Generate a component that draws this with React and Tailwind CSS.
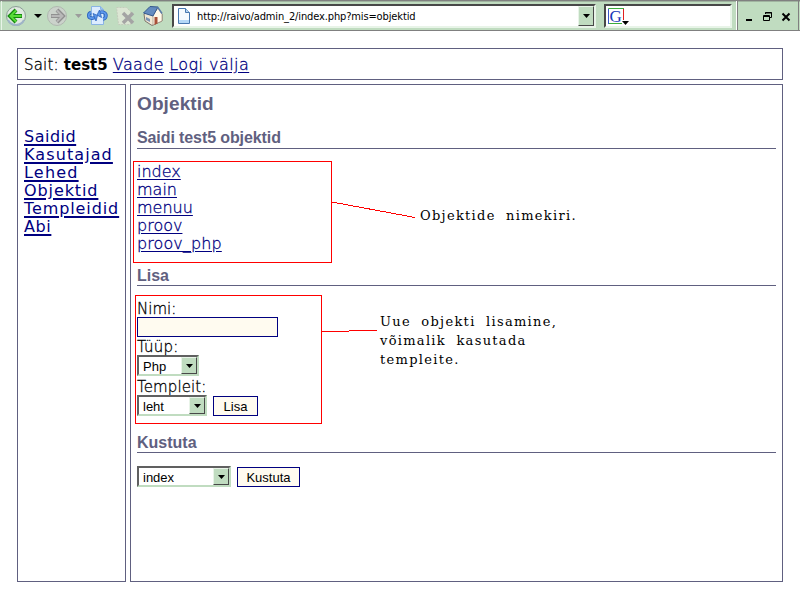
import React from "react";

function Toolbar() {
  return (
    <div className="flex h-[31px] w-full border-t border-b border-[#808080] bg-[#c0dcc0] shadow-[inset_0_1px_0_#a0b4a0]">
      <svg width="172" height="29" viewBox="0 1 172 29" className="block shrink-0">
        <path d="M1.5 1V30" stroke="#e8f4e8" />
        <circle cx="16" cy="16" r="9.5" fill="#dfe9df" stroke="#8c9c98" />
        <path d="M8 20a9 9 0 0 0 16 0" fill="none" stroke="#9fb4c8" strokeWidth="2" />
        <path d="M10 16h12M16 10l-6 6 6 6" fill="none" stroke="#168a10" strokeWidth="4" />
        <path d="M10.500 16H21.500M16 10.500L10.500 16l5.500 5.500" fill="none" stroke="#58dc38" strokeWidth="2" />
        <path d="M34 14h8l-4 4z" fill="#000" />
        <circle cx="57" cy="16" r="9.500" fill="#cbd2cb" stroke="#b0b8b0" />
        <path d="M51 16h12M57 10l6 6-6 6" fill="none" stroke="#909090" strokeWidth="4" />
        <path d="M51.500 16H62.500M57 10.500l5.500 5.500-5.500 5.500" fill="none" stroke="#b8b8b8" strokeWidth="2" />
        <path d="M75 14h7l-3.500 4z" fill="#9c9c9c" />
        <path d="M91.500 6.500h9l3 3v15h-12z" fill="#dcecff" stroke="#8ab4e4" />
        <path d="M100.500 6.500v3h3" fill="#9cc4f0" stroke="#8ab4e4" />
        <path d="M91 12.500c-3 1-3 5 0 5.500 1.500.3 3 0 4-.5" fill="none" stroke="#2c64bc" strokeWidth="3.500" />
        <path d="M91 12.500c-3 1-3 5 0 5.500 1.500.3 3 0 4-.5" fill="none" stroke="#5c98ec" strokeWidth="1.800" />
        <path d="M93 13.500l4.500 2-1.500 5.500z" fill="#5c98ec" stroke="#2c64bc" strokeWidth=".8" />
        <path d="M103 19c3.500-.5 4-5 1-6.500-1.500-.7-3-.5-4 0" fill="none" stroke="#2c64bc" strokeWidth="3.500" />
        <path d="M103 19c3.500-.5 4-5 1-6.500-1.500-.7-3-.5-4 0" fill="none" stroke="#5c98ec" strokeWidth="1.800" />
        <path d="M101.500 17.500l-4.500-2.500 2.500-5z" fill="#5c98ec" stroke="#2c64bc" strokeWidth=".8" />
        <path d="M116.500 7.500h10l4 4v13h-12z" fill="#dce6d4" stroke="#c4ccbc" strokeDasharray="2 1" />
        <path d="M123 13l10 10M133 13l-10 10" stroke="#a4a4a4" strokeWidth="3.500" />
        <path d="M144 14l8-7 10 7v7l-10 4.500-7-4.500z" fill="#f0e8d4" stroke="#7c746c" />
        <path d="M153 15l5-7 4 6v7l-9 4z" fill="#fff8e8" stroke="#a09080" strokeWidth=".7" />
        <path d="M143.500 13l6.500-6.500 8 .5-5 9z" fill="#648cc0" stroke="#34588c" />
        <path d="M157.500 7l4.500 6.500" stroke="#5c7ca8" strokeWidth="1.500" />
        <path d="M154.500 17h3v6.500l-3 1.500z" fill="#a85038" />
        <path d="M146 17l4 2v3l-4-2z" fill="#7c94b4" />
      </svg>
      <div className="mt-[3px] flex h-[24px] w-[424px] shrink-0 items-center border-2 border-[#484848] border-r-[#e8f4e8] border-b-[#e8f4e8] bg-white">
        <svg width="21" height="20" viewBox="0 0 21 20" className="block shrink-0">
          <path d="M4.500 2.500h7l4 4v11h-11z" fill="#f4faff" stroke="#4878b0" />
          <path d="M11.500 2.500v4h4" fill="#b4d4f4" stroke="#4878b0" />
          <path d="M5 14h10v3H5z" fill="#b4d8f8" />
        </svg>
        <span className="mt-[2px] ml-[2px] grow whitespace-nowrap font-['DejaVu_Sans_Condensed','DejaVu_Sans',sans-serif] text-[11px] font-normal tracking-[-0.13px] text-black [font-stretch:condensed]">
          http://raivo/admin_2/index.php?mis=objektid
        </span>
        <SelectArrow />
      </div>
      <div className="mt-[3px] ml-[8px] flex h-[24px] w-[128px] shrink-0 border-2 border-[#484848] border-r-[#e8f4e8] border-b-[#e8f4e8] bg-white">
        <svg width="28" height="20" viewBox="0 0 28 20" className="block">
          <path d="M2.500 18V2.500H18" fill="none" stroke="#3cac3c" />
          <path d="M2.500 3v15" stroke="#3858c8" />
          <path d="M17.500 3v11" stroke="#e02020" />
          <path d="M3 17.500h13" stroke="#3cac3c" />
          <text x="3.500" y="15.500" fontFamily="Liberation Serif, serif" fontSize="17" fill="#1838b8">G</text>
          <path d="M16 15h7l-3.500 4z" fill="#000" />
        </svg>
      </div>
      <div className="ml-[4px] w-[2px] shrink-0 border-l border-[#fff] border-r border-r-[#808080]" />
      <svg width="62" height="29" viewBox="738 1 62 29" className="block shrink-0">
        <path d="M746 19h6v2h-6z" fill="#000" />
        <path d="M765.500 14v-1.500h6v5h-2M765 13h7" fill="none" stroke="#000" />
        <path d="M763.500 15.500h6v5h-6zM763 16.500h7" fill="none" stroke="#000" />
        <path d="M782.500 13.500l7 7M789.500 13.500l-7 7" stroke="#000" strokeWidth="2" />
        <path d="M798.500 1v29" stroke="#808080" />
      </svg>
    </div>
  );
}

function SelectArrow() {
  return (
    <span className="flex h-full w-[16px] shrink-0 items-center justify-center border border-t-[#e8f4e8] border-r-[#484848] border-b-[#484848] border-l-[#e8f4e8] bg-[#c0dcc0]">
      <svg width="7" height="4" viewBox="0 0 7 4" className="block">
        <path d="M0 0h7L3.500 4z" fill="#000" />
      </svg>
    </span>
  );
}

function Select({ className, children }) {
  return (
    <div className={`flex h-[21px] shrink-0 border-2 border-t-[#606060] border-r-[#c0dcc0] border-b-[#c0dcc0] border-l-[#606060] bg-white ${className}`}>
      <span className="grow pl-[4px] font-['Liberation_Sans',sans-serif] text-[13px] leading-[19px] text-black [-webkit-text-stroke:0]">
        {children}
      </span>
      <SelectArrow />
    </div>
  );
}

function Button({ className, children }) {
  return (
    <button className={`h-[20px] shrink-0 border border-[#000080] bg-[#fffbf0] pt-px font-['Liberation_Sans',sans-serif] text-[13px] leading-[17px] text-black [-webkit-text-stroke:0] ${className}`}>
      {children}
    </button>
  );
}

function Link({ className = "", children }) {
  return (
    <a href="#" className={`text-[#000080] underline underline-offset-2 ${className}`}>
      {children}
    </a>
  );
}

function SectionTitle({ className = "", children }) {
  return (
    <h2 className={`h-[22px] border-b border-[#606080] font-['Liberation_Sans',sans-serif] text-[16px] font-bold text-[#606080] [-webkit-text-stroke:0] ${className}`}>
      {children}
    </h2>
  );
}

function Note({ className, children }) {
  return (
    <div className={`absolute whitespace-nowrap font-['DejaVu_Serif',serif] text-[13px] leading-[19px] font-normal tracking-[1.3px] text-black [word-spacing:5px] ${className}`}>
      {children}
    </div>
  );
}

export default function App() {
  return (
    <div className="relative h-[600px] w-[800px] overflow-hidden bg-white font-['DejaVu_Sans',sans-serif] text-[16px] font-extralight text-black">
      <Toolbar />
      <div className="mt-[17px] ml-[17px] flex w-[766px] flex-col gap-[4px]">
        <header className="h-[32px] border border-[#606080] pl-[6px] leading-[31px] whitespace-nowrap [-webkit-text-stroke:0.3px]">
          <span className="text-[15px] tracking-[0.2px]">Sait: </span>
          <b className="text-[15px] font-bold [-webkit-text-stroke:0]">test5</b>{" "}
          <Link className="tracking-[0.4px]">Vaade</Link> <Link className="tracking-[0.45px]">Logi välja</Link>
        </header>
        <div className="flex h-[498px] gap-[4px]">
          <nav className="flex w-[109px] shrink-0 flex-col items-start border border-[#606080] pt-[43px] pl-[6px] text-[16px] leading-[18px] font-normal">
            <Link className="tracking-[0.5px] decoration-2">Saidid</Link>
            <Link className="tracking-[1.1px] decoration-2">Kasutajad</Link>
            <Link className="tracking-[1.2px] decoration-2">Lehed</Link>
            <Link className="tracking-[0.9px] decoration-2">Objektid</Link>
            <Link className="tracking-[0.9px] decoration-2">Templeidid</Link>
            <Link className="tracking-[0.6px] decoration-2">Abi</Link>
          </nav>
          <main className="grow border border-[#606080] px-[6px] [-webkit-text-stroke:0.3px]">
            <h1 className="h-[41px] font-['Liberation_Sans',sans-serif] text-[19px] leading-[37px] font-bold tracking-[0.1px] text-[#606080] [-webkit-text-stroke:0]">
              Objektid
            </h1>
            <SectionTitle className="mt-[1px] leading-[22px] tracking-[-0.1px]">Saidi test5 objektid</SectionTitle>
            <ul className="mt-[14px] h-[101px] leading-[18px]">
              <li><Link>index</Link></li>
              <li><Link>main</Link></li>
              <li><Link>menuu</Link></li>
              <li><Link>proov</Link></li>
              <li><Link className="tracking-[0.1px]">proov_php</Link></li>
            </ul>
            <SectionTitle className="leading-[24px]">Lisa</SectionTitle>
            <form className="mt-[14px] h-[131px] text-[15px]">
              <label className="block h-[17px] leading-[18px]">Nimi:</label>
              <input className="block h-[20px] w-[141px] border border-[#000080] bg-[#fffbf0]" />
              <label className="block h-[18px] leading-[21px] tracking-[0.2px]">Tüüp:</label>
              <Select className="w-[62px]">Php</Select>
              <label className="block h-[19px] leading-[23px] tracking-[0.1px]">Templeit:</label>
              <div className="flex items-center gap-[6px]">
                <Select className="w-[70px]">leht</Select>
                <Button className="w-[45px]">Lisa</Button>
              </div>
            </form>
            <SectionTitle className="leading-[24px]">Kustuta</SectionTitle>
            <div className="mt-[13px] flex items-center gap-[6px]">
              <Select className="w-[94px]">index</Select>
              <Button className="w-[63px]">Kustuta</Button>
            </div>
          </main>
        </div>
      </div>
      <div className="absolute top-[161px] left-[133px] h-[102px] w-[199px] border border-[#ff0000]" />
      <div className="absolute top-[295px] left-[135px] h-[129px] w-[187px] border border-[#ff0000]" />
      <svg width="100" height="140" viewBox="320 200 100 140" shapeRendering="crispEdges" className="absolute top-[200px] left-[320px]">
        <path d="M332 202L415 217.500M322 331.500h27M349 330.500h28" fill="none" stroke="#ff0000" />
      </svg>
      <Note className="top-[206px] left-[420px]">Objektide nimekiri.</Note>
      <Note className="top-[312px] left-[380px]">
        Uue objekti lisamine,
        <br />
        võimalik kasutada
        <br />
        templeite.
      </Note>
    </div>
  );
}
